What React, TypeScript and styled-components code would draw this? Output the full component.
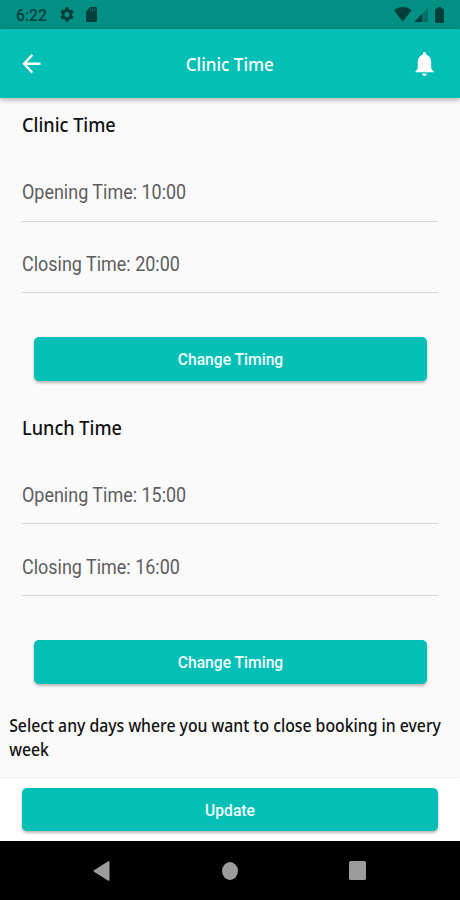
import React from "react";
import styled, { createGlobalStyle } from "styled-components";

const TEAL = "#03bfb5";
const SQUEEZE = 0.909;

const GlobalStyle = createGlobalStyle`
  * { box-sizing: border-box; }
  body { margin: 0; background: #fafafa; }
  h1, h2, p { margin: 0; font-weight: inherit; }
`;

const Screen = styled.div`
  display: flex;
  flex-direction: column;
  width: 460px;
  height: 900px;
  overflow: hidden;
  background: #fafafa;
  font-family: "Noto Sans", sans-serif;
`;

const StatusBar = styled.div`
  display: flex;
  align-items: center;
  height: 29px;
  flex: none;
  padding: 0 16px 0 16px;
  background: #028f84;
  color: #023f3b;
`;

const Clock = styled.span`
  width: 44px;
  font: 500 17.3px/29px Roboto, sans-serif;
  padding-top: 2px;
  white-space: nowrap;
  transform: scaleX(${SQUEEZE});
  transform-origin: left;
`;

const Glyph = styled.svg<{ $w: number; $h: number; $ml?: number; $mt?: number }>`
  display: block;
  flex: none;
  width: ${(p) => p.$w}px;
  height: ${(p) => p.$h}px;
  margin-left: ${(p) => p.$ml ?? 0}px;
  margin-top: ${(p) => p.$mt ?? 0}px;
  fill: currentColor;
`;

const Spacer = styled.div`
  flex: 1;
`;

const AppBar = styled.header`
  display: grid;
  grid-template-columns: 27px 1fr 27px;
  align-items: center;
  height: 69px;
  flex: none;
  padding: 0 22.5px 0 17.5px;
  background: ${TEAL};
  color: #fff;
  box-shadow: 0 2px 5px rgba(0, 0, 0, 0.3);
  z-index: 1;
`;

const Title = styled.h1`
  font-size: 18.5px;
  font-weight: 500;
  line-height: 26px;
  text-align: center;
  padding-left: 4px;
  transform: scaleX(0.92);
`;

const IconButton = styled.button`
  display: block;
  padding: 0;
  border: 0;
  background: none;
  color: inherit;
`;

const Content = styled.main`
  flex: 1;
  min-height: 0;
  overflow: hidden;
`;

const Section = styled.section`
  height: 302.7px;
  padding: 12px 22px 0;
`;

const Heading = styled.h2`
  height: 30px;
  font-size: 19.7px;
  font-weight: 500;
  line-height: 30px;
  color: #111;
  transform: scaleX(0.92);
  transform-origin: left;
`;

const Field = styled.div<{ $height: number }>`
  display: flex;
  align-items: flex-end;
  height: ${(p) => p.$height}px;
  padding-bottom: 15.5px;
  border-bottom: 1px solid #d7d7d7;
`;

const FieldText = styled.span`
  font: 400 19.7px/24px Roboto, sans-serif;
  color: #5d5d5d;
  white-space: nowrap;
  transform: scaleX(0.912);
  transform-origin: left;
`;

const Button = styled.button<{ $height: number }>`
  display: block;
  width: 100%;
  height: ${(p) => p.$height}px;
  padding: 0;
  border: 0;
  border-radius: 5px;
  background: ${TEAL};
  color: #f2fffe;
  font: 500 17.2px/20px Roboto, sans-serif;
  box-shadow: 0 2px 3px rgba(0, 0, 0, 0.28);
`;

const ButtonLabel = styled.span`
  display: block;
  transform: scaleX(${SQUEEZE});
`;

const ButtonSlot = styled.div`
  padding: 43.5px 11.5px 0;
`;

const Note = styled.p`
  width: 485px;
  padding: 11px 0 0 10px;
  font-size: 17.2px;
  font-weight: 500;
  line-height: 23.5px;
  color: #111;
  transform: scaleX(0.918);
  transform-origin: left;
`;

const BottomBar = styled.footer`
  height: 63px;
  flex: none;
  padding: 10px 22px;
  background: #fff;
  box-shadow: 0 0 2px rgba(0, 0, 0, 0.14);
`;

const NavBar = styled.nav`
  display: flex;
  align-items: center;
  height: 59px;
  flex: none;
  padding-left: 93px;
  background: #000;
  color: #9c9c9c;
`;

interface TimeSectionProps {
  title: string;
  opening: string;
  closing: string;
}

function TimeSection({ title, opening, closing }: TimeSectionProps) {
  return (
    <Section>
      <Heading>{title}</Heading>
      <Field $height={81.7}>
        <FieldText>Opening Time: {opening}</FieldText>
      </Field>
      <Field $height={71.7}>
        <FieldText>Closing Time: {closing}</FieldText>
      </Field>
      <ButtonSlot>
        <Button $height={44}>
          <ButtonLabel>Change Timing</ButtonLabel>
        </Button>
      </ButtonSlot>
    </Section>
  );
}

export default function App() {
  return (
    <Screen>
      <GlobalStyle />
      <StatusBar>
        <Clock>6:22</Clock>
        <Glyph $w={14} $h={15} viewBox="2 2 20 20" preserveAspectRatio="none">
          <path d="M19.14 12.94c.04-.3.06-.61.06-.94 0-.32-.02-.64-.07-.94l2.03-1.58a.49.49 0 0 0 .12-.61l-1.92-3.32a.488.488 0 0 0-.59-.22l-2.39.96c-.5-.38-1.03-.7-1.62-.94l-.36-2.54a.484.484 0 0 0-.48-.41h-3.84c-.24 0-.43.17-.47.41l-.36 2.54c-.59.24-1.13.57-1.62.94l-2.39-.96c-.22-.08-.47 0-.59.22L2.74 8.87c-.12.21-.08.47.12.61l2.03 1.58c-.05.3-.09.63-.09.94s.02.64.07.94l-2.03 1.58a.49.49 0 0 0-.12.61l1.92 3.32c.12.22.37.29.59.22l2.39-.96c.5.38 1.03.7 1.62.94l.36 2.54c.05.24.24.41.48.41h3.84c.24 0 .44-.17.47-.41l.36-2.54c.59-.24 1.13-.56 1.62-.94l2.39.96c.22.08.47 0 .59-.22l1.92-3.32c.12-.22.07-.47-.12-.61l-2.01-1.58zM12 15.6c-1.98 0-3.6-1.62-3.6-3.6s1.62-3.6 3.6-3.6 3.6 1.62 3.6 3.6-1.62 3.6-3.6 3.6z" />
        </Glyph>
        <Glyph $w={11} $h={15} $ml={12} viewBox="4 2 16 20" preserveAspectRatio="none">
          <path d="M18 2h-8L4.02 8 4 20c0 1.1.9 2 2 2h12c1.1 0 2-.9 2-2V4c0-1.1-.9-2-2-2z" />
          <path d="M10 4h1.5v4H10zM13 4h1.5v4H13zM16 4h1.5v4H16z" fill="#028f84" opacity="0.6" />
        </Glyph>
        <Spacer />
        <Glyph $w={17.5} $h={14.5} viewBox="0 0 17.5 14.5">
          <path d="M0 3.2C5 -1 12.5 -1 17.5 3.2L9.3 14.1Q8.7 14.7 8.2 14.1Z" />
        </Glyph>
        <Glyph $w={14} $h={14} $ml={2} viewBox="0 0 14 14" $mt={1}>
          <path d="M14 0V14H8V6Z" opacity="0.38" />
          <path d="M8 6V14H0Z" />
        </Glyph>
        <Glyph $w={9} $h={16} $ml={7.5} viewBox="0 0 9 16">
          <path d="M3 0H6V1.6H8Q9 1.6 9 2.7V15Q9 16 8 16H1Q0 16 0 15V2.7Q0 1.6 1 1.6H3Z" />
        </Glyph>
      </StatusBar>
      <AppBar>
        <IconButton aria-label="Back">
          <Glyph $w={27} $h={29.5} viewBox="0 0 24 24" preserveAspectRatio="none">
            <path d="M20 11H7.83l5.59-5.59L12 4l-8 8 8 8 1.41-1.41L7.83 13H20v-2z" />
          </Glyph>
        </IconButton>
        <Title>Clinic Time</Title>
        <IconButton aria-label="Notifications">
          <Glyph $w={27} $h={29.5} viewBox="0 0 24 24" preserveAspectRatio="none">
            <path d="M12 22c1.1 0 2-.9 2-2h-4c0 1.1.89 2 2 2zm6-6v-5c0-3.07-1.64-5.64-4.5-6.32V4c0-.83-.67-1.5-1.5-1.5s-1.5.67-1.5 1.5v.68C7.63 5.36 6 7.92 6 11v5l-2 2v1h16v-1l-2-2z" />
          </Glyph>
        </IconButton>
      </AppBar>
      <Content>
        <TimeSection title="Clinic Time" opening="10:00" closing="20:00" />
        <TimeSection title="Lunch Time" opening="15:00" closing="16:00" />
        <Note>Select any days where you want to close booking in every week</Note>
      </Content>
      <BottomBar>
        <Button $height={43}>
          <ButtonLabel>Update</ButtonLabel>
        </Button>
      </BottomBar>
      <NavBar>
        <Glyph $w={17} $h={20} viewBox="0 0 17 20">
          <path d="M15.3.2Q16.5-.2 16.5 1V19Q16.5 20.2 15.3 19.7L1 10.8Q0 10 1 9.2Z" />
        </Glyph>
        <Glyph $w={16} $h={18} $ml={111.5} viewBox="0 0 16 18">
          <ellipse cx="8" cy="9" rx="8" ry="9" />
        </Glyph>
        <Glyph $w={17} $h={19} $ml={111} viewBox="0 0 17 19">
          <rect width="17" height="19" rx="1.5" />
        </Glyph>
      </NavBar>
    </Screen>
  );
}
